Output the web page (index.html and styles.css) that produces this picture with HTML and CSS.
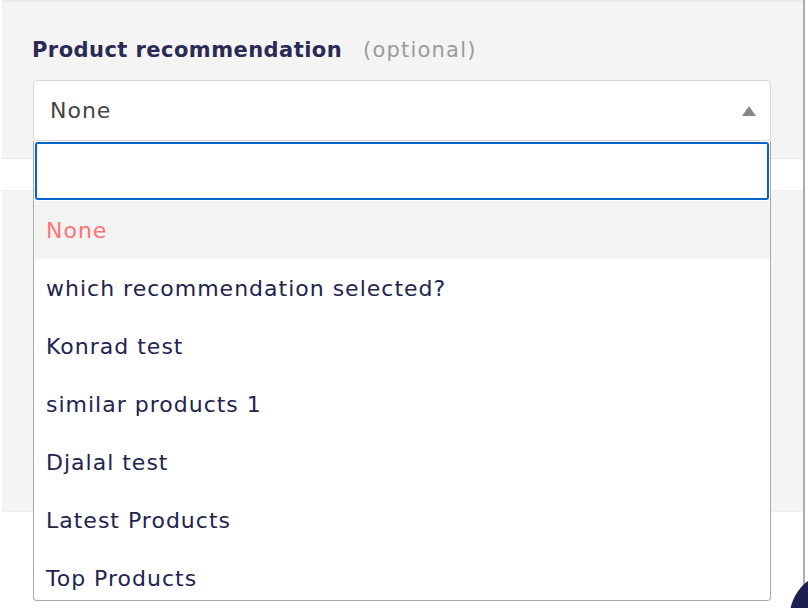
FILE: index.html
```html
<!DOCTYPE html>
<html lang="en">
<head>
<meta charset="utf-8">
<title>Product recommendation</title>
<link rel="stylesheet" href="styles.css">
</head>
<body>
<div class="page">
  <div class="topline"></div>
  <section class="panel panel-top">
    <div class="field">
      <div class="label"><span class="label-main">Product recommendation</span><span class="optional">(optional)</span></div>
      <div class="select-wrap">
        <div class="select">
          <span class="select-value">None</span>
          <span class="arrow"></span>
        </div>
        <div class="dropdown">
          <input class="search" type="text" aria-label="Search">
          <ul class="options">
            <li class="option active">None</li>
            <li class="option">which recommendation selected?</li>
            <li class="option">Konrad test</li>
            <li class="option">similar products 1</li>
            <li class="option">Djalal test</li>
            <li class="option">Latest Products</li>
            <li class="option">Top Products</li>
          </ul>
        </div>
      </div>
    </div>
  </section>
  <div class="spacer"></div>
  <section class="panel panel-mid"></section>
</div>
<div class="fab"></div>
</body>
</html>
```
FILE: styles.css
```css
* { box-sizing: border-box; }

html, body {
  margin: 0;
  padding: 0;
  background: #ffffff;
  overflow: hidden;
}

body {
  width: 808px;
  height: 608px;
  position: relative;
  font-family: "DejaVu Sans", "Liberation Sans", sans-serif;
}

.page {
  width: 805px;
  height: 608px;
  border-right: 2px solid #ababab;
}

.topline {
  height: 2px;
  background: #ebebeb;
  margin-left: 2px;
}

.panel {
  margin-left: 2px;
  background: #f4f4f4;
}

.panel-top {
  height: 157px;
  padding-top: 36px;
  border-bottom: 1px solid #e9e9e9;
}

.spacer {
  height: 31px;
}

.panel-mid {
  height: 322px;
  border-top: 1px solid #ececec;
  border-bottom: 1px solid #ececec;
}

.field {
  padding: 0 32px 0 30px;
}

.label {
  display: flex;
  align-items: baseline;
  height: 24px;
  line-height: 24px;
  font-size: 21px;
}

.label-main {
  font-weight: bold;
  color: #2a2a55;
  letter-spacing: 0.45px;
}

.optional {
  margin-left: 21px;
  color: #9b9b9b;
  letter-spacing: 1.2px;
}

.select-wrap {
  position: relative;
  margin-top: 18px;
  margin-left: 1px;
}

.select {
  height: 61px;
  border: 1px solid #d9d9d9;
  border-radius: 4px;
  background: #ffffff;
  display: flex;
  align-items: center;
  justify-content: space-between;
  padding: 0 14px 0 16px;
}

.select-value {
  font-size: 22px;
  color: #444444;
  letter-spacing: 1px;
}

.arrow {
  width: 0;
  height: 0;
  border-left: 7.5px solid transparent;
  border-right: 7.5px solid transparent;
  border-bottom: 10px solid #888888;
  margin-top: 1px;
}

.dropdown {
  position: absolute;
  top: 100%;
  left: 0;
  width: 100%;
  height: 460px;
  overflow: hidden;
  background: #ffffff;
  border: 1px solid #a9a9a9;
  border-top: none;
  border-radius: 0 0 4px 4px;
  z-index: 2;
}

.search {
  display: block;
  width: calc(100% - 2px);
  height: 58px;
  margin: 1px 1px 1px 1px;
  border: 2px solid #0564cc;
  border-radius: 3px;
  outline: none;
  background: #ffffff;
}

.options {
  list-style: none;
  margin: 0;
  padding: 0;
}

.option {
  height: 58px;
  display: flex;
  align-items: center;
  padding-left: 12px;
  font-size: 22px;
  color: #23234f;
  letter-spacing: 1px;
}

.option.active {
  background: #f3f3f3;
  color: #ff7373;
}

.fab {
  position: absolute;
  left: 789px;
  top: 571px;
  width: 19px;
  height: 37px;
  background: radial-gradient(circle 47px at 47px 47px, #1f1f4f 46px, rgba(31, 31, 79, 0) 47px);
}
```
